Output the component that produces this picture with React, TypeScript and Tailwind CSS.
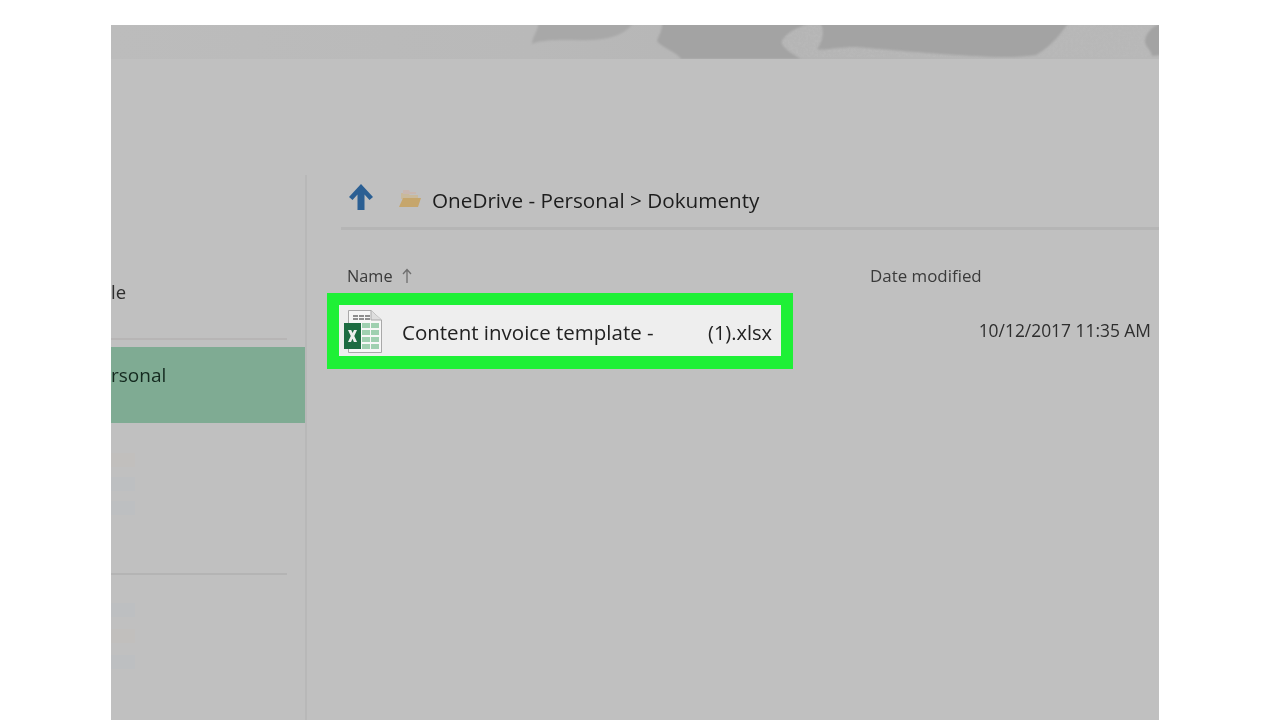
import React from 'react';

const FONT = "font-['Open_Sans','Noto_Sans',sans-serif]";

const Banner = () => (
  <svg width="1048" height="34" viewBox="0 0 1048 34" className="block">
    <defs>
      <linearGradient id="fade" x1="0" x2="1" y1="0" y2="0">
        <stop offset="0" stopColor="#bcbcbc" />
        <stop offset="0.4" stopColor="#b9b9b9" />
        <stop offset="0.65" stopColor="#b5b5b5" />
        <stop offset="1" stopColor="#b8b8b8" />
      </linearGradient>
      <filter id="soft"><feGaussianBlur stdDeviation="1.2" /></filter>
      <filter id="grain" x="0" y="0" width="100%" height="100%">
        <feTurbulence type="fractalNoise" baseFrequency="0.4" numOctaves="2" seed="4" />
        <feColorMatrix values="0 0 0 0 0.5  0 0 0 0 0.5  0 0 0 0 0.5  3 0 0 0 -1.2" />
      </filter>
    </defs>
    <rect width="1048" height="34" fill="url(#fade)" />
    <rect x="655" width="393" height="32" filter="url(#grain)" opacity="0.5" />
    <g fill="#a3a3a3" filter="url(#soft)">
      <path d="M428 -3 H522 C518 6 505 14 480 15 C460 16 436 13 421 19 C421 12 427 6 428 -3 Z" fill="#a8a8a8" />
      <path d="M551 -3 H700 C690 2 680 4 672 14 C668 18 672 24 690 34 H570 C565 26 552 24 546 16 C548 10 552 4 551 -3 Z" />
      <path d="M709 -3 H958 C950 8 942 20 925 30 C900 34 860 31 830 29 C800 27 770 24 745 22 C725 22 712 26 706 24 C712 16 714 6 709 -3 Z" />
      <path d="M1050 -2 C1040 2 1034 10 1034 16 C1034 22 1040 24 1041 31 L1050 30 Z" />
    </g>
  </svg>
);

const ExcelIcon = () => (
  <svg width="40" height="46" viewBox="0 0 40 46" className="shrink-0">
    <path d="M5.5 2.5 H28 L38.5 12 V44.5 H5.5 Z" fill="#f7f7f7" stroke="#a9a9a9" strokeWidth="1" />
    <path d="M28 2.5 V12 H38.5" fill="#dedede" stroke="#a9a9a9" strokeWidth="1" />
    <g fill="#8f8f8f">
      <rect x="10" y="7" width="5" height="2" />
      <rect x="16" y="7" width="5" height="2" />
      <rect x="22" y="7" width="5" height="2" />
      <rect x="10" y="10" width="5" height="2" />
      <rect x="16" y="10" width="5" height="2" />
      <rect x="22" y="10" width="5" height="2" />
    </g>
    <g fill="#9fd0b0">
      <rect x="19" y="15" width="8" height="5" />
      <rect x="28" y="15" width="8" height="5" />
      <rect x="19" y="22" width="8" height="5" />
      <rect x="28" y="22" width="8" height="5" />
      <rect x="19" y="29" width="8" height="5" />
      <rect x="28" y="29" width="8" height="5" />
      <rect x="19" y="36" width="8" height="5" />
      <rect x="28" y="36" width="8" height="5" />
    </g>
    <rect x="1" y="15" width="17" height="26" fill="#1c6b41" />
    <path d="M5 22 H8.2 L9.6 25 L11 22 H14 L11.3 28 L14 34 H10.9 L9.5 30.8 L8 34 H5 L7.8 28 Z" fill="#eeeeee" />
  </svg>
);

const FaintRow = ({ tone }: { tone: string }) => <div className={`h-[14px] w-[24px] ${tone}`} />;

export default function App() {
  return (
    <div className={`w-[1280px] h-[720px] overflow-hidden bg-white pt-[25px] pl-[111px] ${FONT}`}>
      <div className="w-[1048px] h-[695px] bg-[#c0c0c0] overflow-hidden">
        <Banner />
        <div className="flex mt-[116px] h-[545px] blur-[0.4px]">
          {/* sidebar */}
          <aside className="w-[196px] shrink-0 border-r-2 border-[#b8b8b8]">
            <div className="pt-[104px] h-[163px] pr-[18px]">
              <p className="text-[18.5px] leading-[26px] text-[#2e2e2e]">le</p>
              <div className="mt-[33px] h-[2px] bg-[#b7b5b5]" />
            </div>
            <div className="h-[76px] mt-[9px] w-[194px] bg-[#7fab93] pt-[15px]">
              <p className="text-[19px] leading-[26px] text-[#14291f]">rsonal</p>
            </div>
            <div className="flex flex-col gap-[10px] pt-[30px] h-[150px]">
              <FaintRow tone="bg-[#c1bfbd]" />
              <FaintRow tone="bg-[#bdbfc1]" />
              <FaintRow tone="bg-[#bdbfc1]" />
            </div>
            <div className="h-[2px] mr-[18px] bg-[#b4b4b4]" />
            <div className="flex flex-col gap-[12px] pt-[28px]">
              <FaintRow tone="bg-[#bdbfc1]" />
              <FaintRow tone="bg-[#c1bfbd]" />
              <FaintRow tone="bg-[#bdbfc1]" />
            </div>
          </aside>

          {/* file list */}
          <main className="flex-1 pl-[20px]">
            <div className="ml-[14px] pt-[6px] h-[55px] border-b-[3px] border-[#b5b5b5] flex items-start">
              <svg width="24" height="26" viewBox="0 0 24 26" className="ml-[8px] mt-[3px] shrink-0">
                <path d="M12 0 L24 13 L20.5 16 L15.5 10.5 V26 H8.5 V10.5 L3.5 16 L0 13 Z" fill="#2b5f93" />
              </svg>
              <svg width="24" height="20" viewBox="0 0 24 20" className="ml-[25px] mt-[8px] shrink-0">
                <path d="M3 4 H10 L12 6 H20 V10 H3 Z" fill="#c9b99c" />
                <path d="M5 1 H11 L12 3 H18 V5 H5 Z" fill="#c9b7b0" />
                <path d="M5 9 H23 L20 18 H1 Z" fill="#c6a66c" />
              </svg>
              <p className="ml-[10px] mt-[5px] text-[20.7px] leading-[28px] text-[#1d1d1d] whitespace-nowrap">OneDrive - Personal &gt; Dokumenty</p>
            </div>

            <div className="flex mt-[34px] h-[24px] items-center text-[#3a3a3a]">
              <div className="w-[543px] pl-[20px] flex items-center text-[16.3px]">
                <span>Name</span>
                <svg width="12" height="16" viewBox="0 0 12 16" className="ml-[8px]">
                  <path d="M6 15 V2 M2 6 L6 1.5 L10 6" fill="none" stroke="#6e6e6e" strokeWidth="1.3" />
                </svg>
              </div>
              <span className="text-[16.9px]">Date modified</span>
            </div>

            <div className="flex justify-between items-center pr-[8px] mt-[5px]">
              <div className="w-[466px] h-[76px] border-[12px] border-b-[13px] border-[#1ef036] bg-[#eeeeee] flex items-center pl-[4px] pr-[9px]">
                <ExcelIcon />
                <span className="ml-[19px] mt-[4px] text-[20.5px] text-[#222222] whitespace-nowrap">Content invoice template -</span>
                <span className="ml-auto mt-[4px] text-[20px] text-[#222222]">(1).xlsx</span>
              </div>
              <span className="text-[17.4px] text-[#2e2e2e] whitespace-nowrap -mt-[1px]">10/12/2017 11:35 AM</span>
            </div>
          </main>
        </div>
      </div>
    </div>
  );
}
